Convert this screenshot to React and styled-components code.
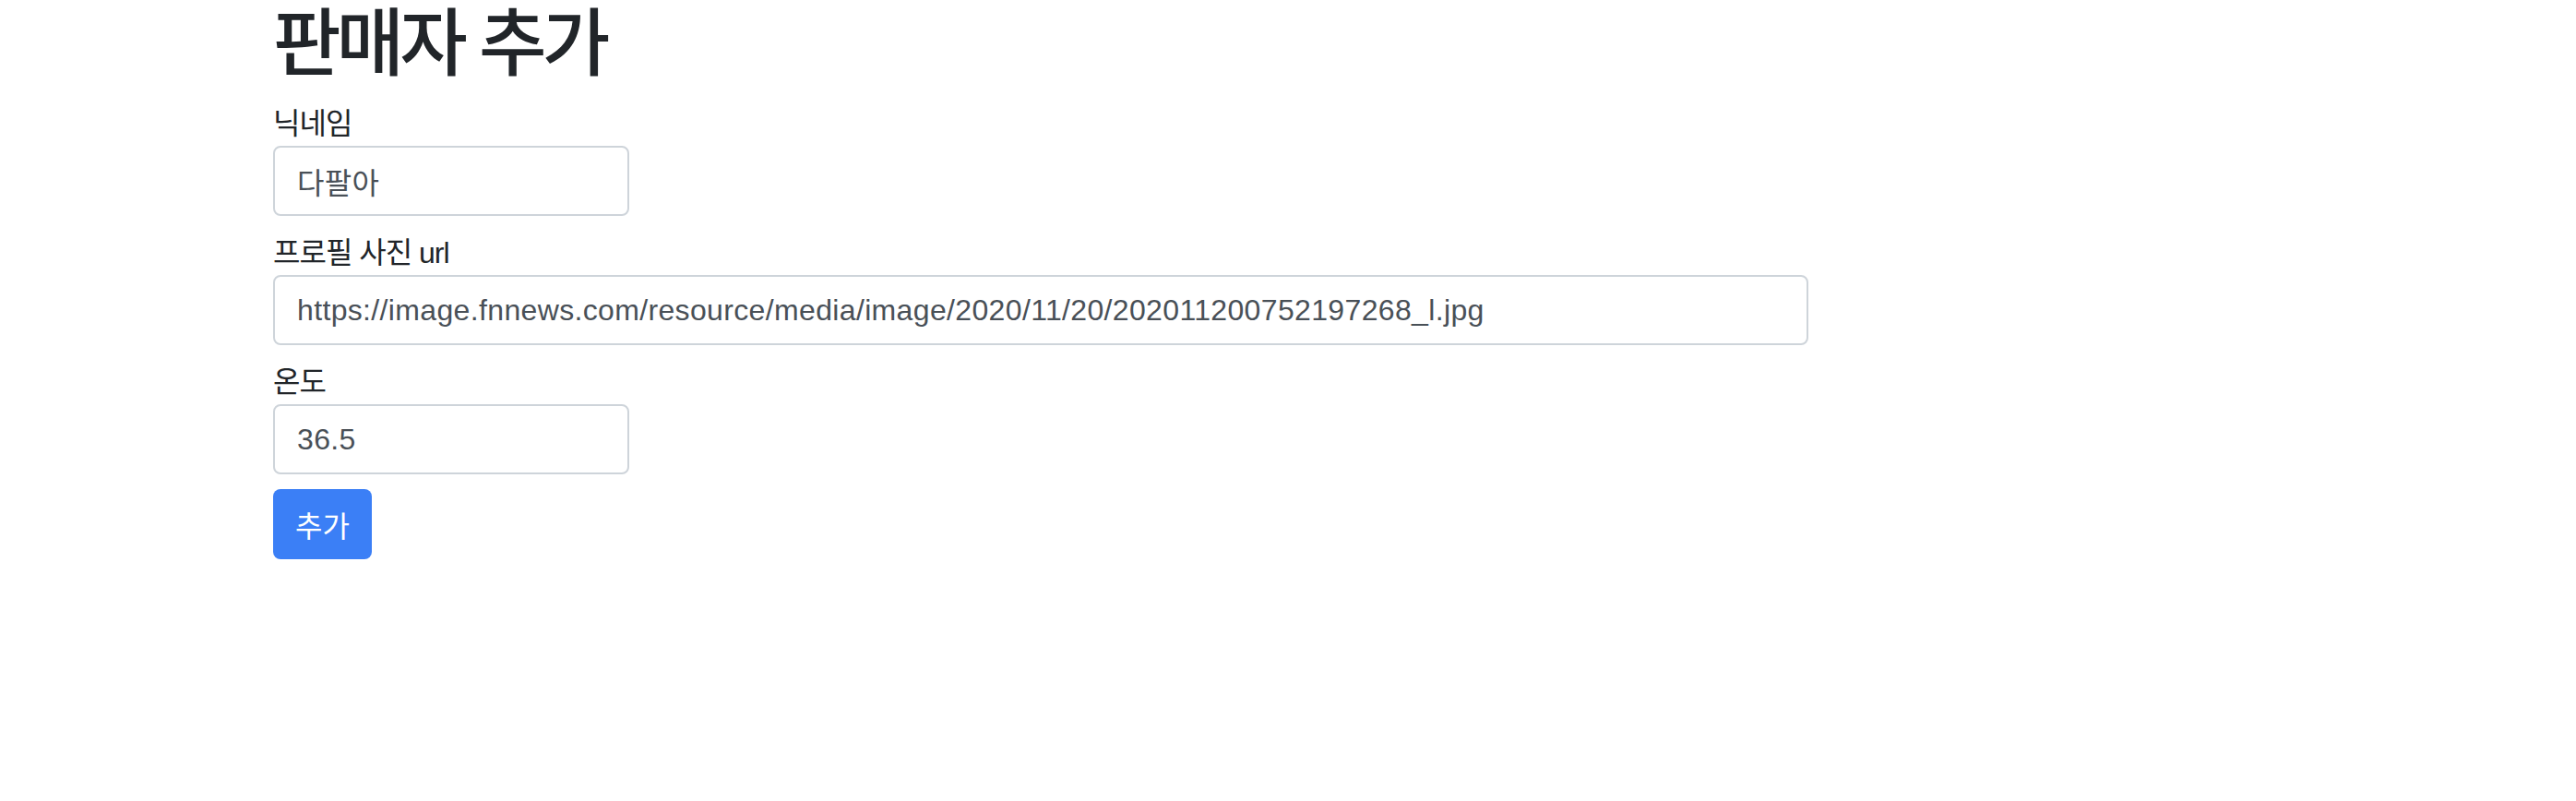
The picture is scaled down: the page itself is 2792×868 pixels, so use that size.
import React from "react";
import styled, { createGlobalStyle } from "styled-components";

const Global = createGlobalStyle`
  html, body { margin: 0; padding: 0; background: #fff; }
  body {
    font-family: "Liberation Sans", "Noto Sans CJK KR", sans-serif;
    color: #212529;
  }
  * { box-sizing: border-box; }
`;

const Page = styled.div`
  width: 2200px;
  margin: 0 auto;
`;

const Title = styled.h1`
  margin: 0 0 14px;
  font-size: 80px;
  line-height: 96px;
  font-weight: 500;
  color: #212529;
  letter-spacing: -5px;
`;

const Group = styled.div`
  display: flex;
  flex-direction: column;
  align-items: flex-start;
  margin-bottom: 16px;
`;

const Label = styled.label`
  display: block;
  font-size: 32px;
  line-height: 48px;
  color: #212529;
  letter-spacing: -1px;
`;

const Input = styled.input`
  width: ${(p) => p.$w}px;
  height: 76px;
  padding: 0 24px;
  border: 2px solid #ced4da;
  border-radius: 8px;
  font-family: "Liberation Sans", "Noto Sans CJK KR", sans-serif;
  font-size: 32px;
  letter-spacing: 0.35px;
  color: #495057;
  background: #fff;
  outline: none;
`;

const Button = styled.button`
  height: 76px;
  padding: 0 24px;
  border: none;
  border-radius: 8px;
  background: #3b7ff6;
  color: #fff;
  font-family: "Liberation Sans", "Noto Sans CJK KR", sans-serif;
  font-size: 32px;
  cursor: pointer;
`;

export default function App() {
  return (
    <Page>
      <Global />
      <Title>판매자 추가</Title>
      <form onSubmit={(e) => e.preventDefault()}>
        <Group>
          <Label>닉네임</Label>
          <Input $w={386} defaultValue="다팔아" />
        </Group>
        <Group>
          <Label>프로필 사진 url</Label>
          <Input
            $w={1664}
            defaultValue="https://image.fnnews.com/resource/media/image/2020/11/20/202011200752197268_l.jpg"
          />
        </Group>
        <Group>
          <Label>온도</Label>
          <Input $w={386} defaultValue="36.5" />
        </Group>
        <Button type="submit">추가</Button>
      </form>
    </Page>
  );
}
